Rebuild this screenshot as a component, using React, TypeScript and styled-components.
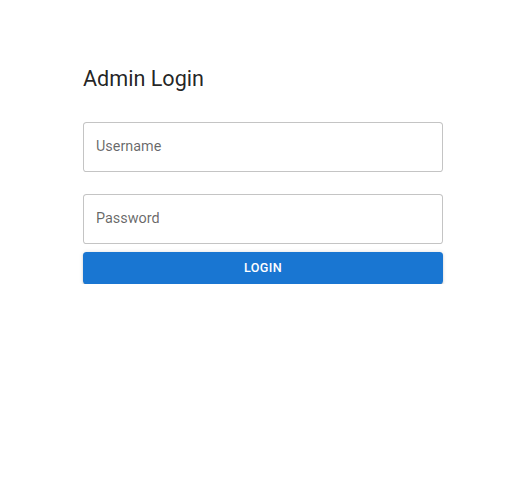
import React from "react";
import styled, { createGlobalStyle } from "styled-components";

const GlobalStyle = createGlobalStyle`
  html, body {
    margin: 0;
    padding: 0;
    background: #ffffff;
    font-family: Roboto, "Helvetica Neue", Arial, sans-serif;
  }
  * { box-sizing: border-box; }
`;

const Page = styled.main`
  display: flex;
  justify-content: center;
  padding: 65px 0 0 2px;
`;

const Panel = styled.section`
  width: 360px;
  display: flex;
  flex-direction: column;
`;

const Title = styled.h1`
  margin: 0;
  font-family: Roboto, sans-serif;
  font-weight: 400;
  font-size: 21.6px;
  line-height: 28.8px;
  color: rgba(0, 0, 0, 0.87);
`;

const Form = styled.form`
  display: flex;
  flex-direction: column;
  margin-top: 28px;
`;

const Field = styled.input<{ $gapAfter: number }>`
  width: 100%;
  height: 50px;
  margin: 0 0 ${(p) => p.$gapAfter}px 0;
  padding: 0 12px;
  border: 1px solid rgba(0, 0, 0, 0.23);
  border-radius: 3.6px;
  font-family: Roboto, sans-serif;
  font-size: 14.4px;
  color: rgba(0, 0, 0, 0.87);
  background: #fff;
  outline: none;
  &::placeholder {
    color: rgba(0, 0, 0, 0.6);
    opacity: 1;
  }
`;

const Button = styled.button`
  width: 100%;
  height: 32px;
  border: none;
  border-radius: 3.6px;
  background: #1976d2;
  color: #ffffff;
  font-family: Roboto, sans-serif;
  font-weight: 500;
  font-size: 12.6px;
  letter-spacing: 0.36px;
  text-transform: uppercase;
  cursor: pointer;
  box-shadow: 0px 2.7px 0.9px -1.8px rgba(0, 0, 0, 0.2),
    0px 1.8px 1.8px 0px rgba(0, 0, 0, 0.14),
    0px 0.9px 4.5px 0px rgba(0, 0, 0, 0.12);
`;

export default function App() {
  return (
    <>
      <GlobalStyle />
      <Page>
        <Panel>
          <Title>Admin Login</Title>
          <Form onSubmit={(e) => e.preventDefault()}>
            <Field $gapAfter={22} type="text" placeholder="Username" />
            <Field $gapAfter={8} type="password" placeholder="Password" />
            <Button type="submit">Login</Button>
          </Form>
        </Panel>
      </Page>
    </>
  );
}
